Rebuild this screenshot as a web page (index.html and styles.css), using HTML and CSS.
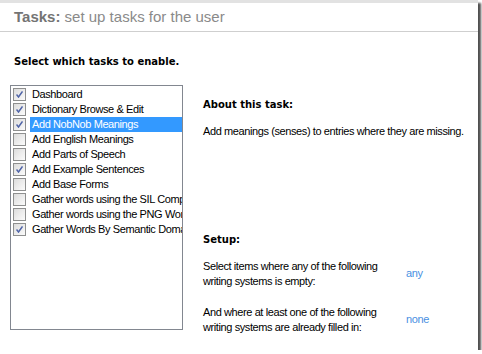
FILE: index.html
```html
<!DOCTYPE html>
<html lang="en">
<head>
  <meta charset="UTF-8" />
  <title>Tasks</title>
  <link rel="stylesheet" href="styles.css">
</head>
<body>
  <div class="frame">
    <div class="header"><b>Tasks:</b> set up tasks for the user</div>

    <div class="content">
      <div class="intro">Select which tasks to enable.</div>

      <div class="columns">
        <div class="listbox">
          <div class="item"><span class="box on"></span><span class="label">Dashboard</span></div>
          <div class="item"><span class="box on"></span><span class="label">Dictionary Browse &amp; Edit</span></div>
          <div class="item selected"><span class="box on"></span><span class="label">Add NobNob Meanings</span></div>
          <div class="item"><span class="box"></span><span class="label">Add English Meanings</span></div>
          <div class="item"><span class="box"></span><span class="label">Add Parts of Speech</span></div>
          <div class="item"><span class="box on"></span><span class="label">Add Example Sentences</span></div>
          <div class="item"><span class="box"></span><span class="label">Add Base Forms</span></div>
          <div class="item"><span class="box"></span><span class="label">Gather words using the SIL Comparative</span></div>
          <div class="item"><span class="box"></span><span class="label">Gather words using the PNG Wordlist</span></div>
          <div class="item"><span class="box on"></span><span class="label">Gather Words By Semantic Domain</span></div>
        </div>

        <div class="details">
          <div class="title">About this task:</div>
          <div class="description">Add meanings (senses) to entries where they are missing.</div>

          <div class="title setup-title">Setup:</div>
          <div class="setting">
            <div class="setting-text">Select items where any of the following<br>writing systems is empty:</div>
            <a class="setting-value">any</a>
          </div>
          <div class="setting second">
            <div class="setting-text">And where at least one of the following<br>writing systems are already filled in:</div>
            <a class="setting-value">none</a>
          </div>
        </div>
      </div>
    </div>
  </div>
</body>
</html>
```

FILE: styles.css
```css
body {
  margin: 0;
  background: #fff;
  font-family: 'Liberation Sans', Arial, sans-serif;
  font-size: 11px;
  letter-spacing: -0.4px;
  color: #000;
}

.frame {
  width: 478px;
  height: 347px;
  background: #fff;
  border-top: 3px solid #e2e2e2;
  box-shadow: 3px 3px 2px #505050;
}

.header {
  height: 28px;
  line-height: 27px;
  border-bottom: 1px solid #cfcfcf;
  padding-left: 14px;
  font-size: 15px;
  letter-spacing: 0;
  color: #8a8a8a;
}

.header b {
  color: #747474;
}

.content {
  padding-left: 10px;
}

.intro,
.title {
  font-family: 'DejaVu Sans', Verdana, sans-serif;
  font-size: 10px;
  font-weight: bold;
  letter-spacing: 0;
  line-height: 15px;
}

.intro {
  padding: 22px 0 0 4px;
  margin-bottom: 16px;
}

.columns {
  display: flex;
}

.listbox {
  width: 171px;
  height: 242px;
  border: 1px solid #828790;
  padding-top: 1px;
  overflow: hidden;
}

.item {
  display: flex;
  align-items: center;
  height: 15px;
  padding-left: 2px;
}

.box {
  flex: 0 0 auto;
  width: 11px;
  height: 11px;
  border: 1px solid #8e8f8f;
  background: linear-gradient(135deg, #dcdcdc, #fbfbfb);
  margin-right: 4px;
  position: relative;
}

.box.on::after {
  content: "";
  position: absolute;
  left: 2px;
  top: 2px;
  width: 7px;
  height: 7px;
  background: url("data:image/svg+xml,%3Csvg xmlns='http://www.w3.org/2000/svg' viewBox='0 0 7 7'%3E%3Cpath d='M0.5 3.5 L2.5 6 L6.5 0.5' fill='none' stroke='%234f64a8' stroke-width='1.5'/%3E%3C/svg%3E") no-repeat;
}

.label {
  flex: 1;
  height: 15px;
  line-height: 15px;
  padding-left: 2px;
  white-space: nowrap;
  overflow: hidden;
}

.item.selected .label {
  background: #3399ff;
  color: #fff;
}

.details {
  padding: 12px 0 0 20px;
  line-height: 15px;
}

.description {
  margin-top: 12px;
}

.setup-title {
  margin-top: 93px;
}

.setting {
  display: flex;
  align-items: center;
  margin-top: 12px;
}

.setting.second {
  margin-top: 16px;
}

.setting-text {
  width: 203px;
}

.setting-value {
  color: #4a90e2;
  margin-top: -2px;
}
```
